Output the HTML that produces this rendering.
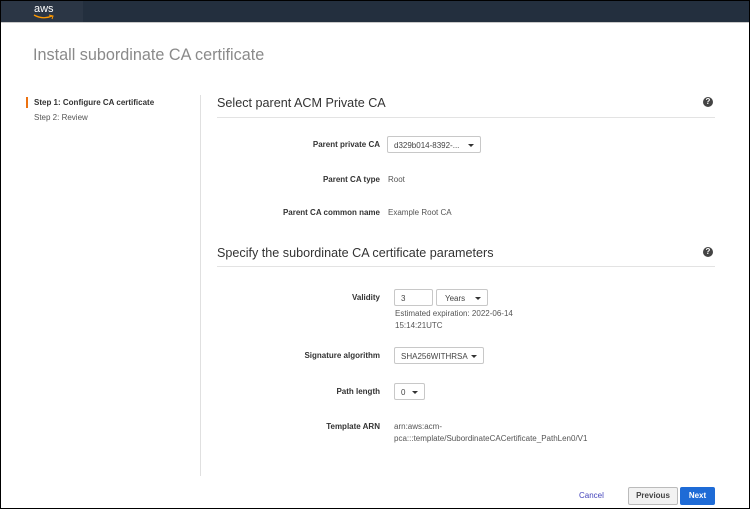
<!DOCTYPE html>
<html><head><meta charset="utf-8"><style>
*{box-sizing:border-box;margin:0;padding:0}
body{width:750px;height:509px;overflow:hidden;background:#fff;font-family:"Liberation Sans",Arial,sans-serif;position:relative}
.a{position:absolute}
.frame{left:0;top:0;width:750px;height:509px;border:1px solid #000;z-index:9;pointer-events:none}
.hdr{left:0;top:0;width:750px;height:23px;background:#232f3e;border-bottom:1px solid #c9c9c9}
.logo{left:0;top:0;width:83px;height:22px;background:#2b3645;border-top:1px solid #bbb}
.title{left:33px;top:46px;font-size:16.2px;color:#8a8a8a}
.nav{font-size:8px;color:#555}
.sec{font-size:12.6px;color:#333}
.line{height:1px;background:#e3e3e3}
.lbl{font-size:8px;font-weight:bold;color:#333;text-align:right;width:200px}
.val{font-size:8px;color:#555}
.sel{border:1px solid #c8c8c8;border-radius:2px;height:17px;font-size:8px;color:#444;padding:4px 6px;background:#fff}
.arr{position:absolute;right:6px;top:7px;width:0;height:0;border-left:3px solid transparent;border-right:3px solid transparent;border-top:3px solid #333}
.help{width:10px;height:10px;border-radius:50%;background:#444;color:#fff;font-size:8px;font-weight:bold;text-align:center;line-height:10px}
</style></head><body>
<div class="a frame"></div>
<div class="a hdr"></div>
<div class="a logo"><div class="a" style="left:34px;top:2px;color:#fff;font-size:11px">aws</div>
<svg class="a" style="left:33px;top:13px" width="22" height="6"><path d="M1 1 Q10 6 19 2" stroke="#f90" stroke-width="1.3" fill="none"/><path d="M16 1 L20 2 L19 5" stroke="#f90" stroke-width="1" fill="none"/></svg></div>
<div class="a title">Install subordinate CA certificate</div>
<div class="a" style="left:26px;top:97px;width:2px;height:11px;background:#ec7211"></div>
<div class="a nav" style="left:34px;top:98px;font-weight:bold;color:#333">Step 1: Configure CA certificate</div>
<div class="a nav" style="left:34px;top:113px">Step 2: Review</div>
<div class="a" style="left:200px;top:95px;width:1px;height:381px;background:#e0e0e0"></div>

<div class="a sec" style="left:217px;top:96px">Select parent ACM Private CA</div>
<div class="a help" style="left:703px;top:97px">?</div>
<div class="a line" style="left:217px;top:117px;width:498px"></div>
<div class="a lbl" style="left:180px;top:140px">Parent private CA</div>
<div class="a sel" style="left:387px;top:136px;width:94px">d329b014-8392-...<span class="arr"></span></div>
<div class="a lbl" style="left:180px;top:175px">Parent CA type</div>
<div class="a val" style="left:388px;top:175px">Root</div>
<div class="a lbl" style="left:180px;top:208px">Parent CA common name</div>
<div class="a val" style="left:388px;top:208px">Example Root CA</div>

<div class="a sec" style="left:217px;top:246px">Specify the subordinate CA certificate parameters</div>
<div class="a help" style="left:703px;top:247px">?</div>
<div class="a line" style="left:217px;top:266px;width:498px"></div>
<div class="a lbl" style="left:180px;top:293px">Validity</div>
<div class="a sel" style="left:394px;top:289px;width:39px">3</div>
<div class="a sel" style="left:436px;top:289px;width:52px;padding-left:8px">Years<span class="arr"></span></div>
<div class="a val" style="left:395px;top:308px;line-height:12px">Estimated expiration: 2022-06-14<br>15:14:21UTC</div>
<div class="a lbl" style="left:180px;top:351px">Signature algorithm</div>
<div class="a sel" style="left:394px;top:347px;width:90px">SHA256WITHRSA<span class="arr"></span></div>
<div class="a lbl" style="left:180px;top:387px">Path length</div>
<div class="a sel" style="left:394px;top:383px;width:31px">0<span class="arr"></span></div>
<div class="a lbl" style="left:180px;top:422px">Template ARN</div>
<div class="a val" style="left:394px;top:421px;line-height:12px">arn:aws:acm-<br>pca:::template/SubordinateCACertificate_PathLen0/V1</div>

<div class="a" style="left:579px;top:491px;font-size:8px;color:#44b">Cancel</div>
<div class="a" style="left:628px;top:487px;width:50px;height:18px;border:1px solid #bbb;border-radius:2px;background:#f2f2f2;font-size:8px;font-weight:bold;color:#444;text-align:center;line-height:16px">Previous</div>
<div class="a" style="left:680px;top:487px;width:35px;height:18px;border-radius:2px;background:#1e6bd6;font-size:8px;font-weight:bold;color:#fff;text-align:center;line-height:18px">Next</div>
</body></html>
